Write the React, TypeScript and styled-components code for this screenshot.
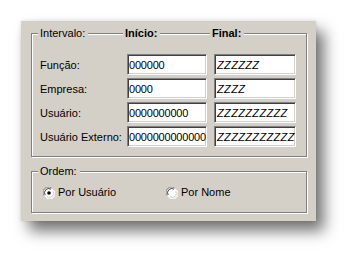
import { Fragment } from 'react'
import styled, { createGlobalStyle } from 'styled-components'

const GlobalStyle = createGlobalStyle`
  html, body {
    margin: 0;
    padding: 0;
    background: #ffffff;
  }
  body {
    font-family: "Liberation Sans", Arial, sans-serif;
    font-size: 11px;
    color: #000000;
  }
`

const Page = styled.div`
  width: 359px;
  height: 264px;
  padding: 21px 0 0 21px;
  box-sizing: border-box;
`

const Dialog = styled.div`
  width: 295px;
  height: 200px;
  box-sizing: border-box;
  padding: 12px 9px 0 10px;
  background: #d4d0c8;
  box-shadow: 8px 10px 14px rgba(0, 0, 0, 0.55), 0 0 4px rgba(0, 0, 0, 0.12);
  display: flex;
  flex-direction: column;
  gap: 14px;
`

const Group = styled.div<{ $padTop: number; $padBottom: number }>`
  position: relative;
  border: 1px solid #808080;
  box-shadow: 1px 1px 0 #ffffff, inset 1px 1px 0 #ffffff;
  padding: ${({ $padTop }) => $padTop}px 0 ${({ $padBottom }) => $padBottom}px 8px;
`

const Grid = styled.div`
  display: grid;
  grid-template-columns: 80px 80px 82px;
  column-gap: 7px;
  row-gap: 3px;
  align-items: center;
`

const Legends = styled(Grid)`
  position: absolute;
  top: -8px;
  left: 8px;
`

const Legend = styled.span<{ $bold?: boolean }>`
  justify-self: start;
  background: #d4d0c8;
  margin-left: ${({ $bold }) => ($bold ? -4 : -2)}px;
  padding: 0 3px 0 2px;
  line-height: 14px;
  font-weight: ${({ $bold }) => ($bold ? 700 : 400)};
`

const SingleLegend = styled(Legend)`
  position: absolute;
  top: -8px;
  left: 8px;
`

const Label = styled.span`
  white-space: nowrap;
  min-width: 0;
`

const Field = styled.div<{ $italic?: boolean }>`
  height: 21px;
  min-width: 0;
  box-sizing: border-box;
  border-style: solid;
  border-width: 1px;
  border-color: #808080 #ffffff #ffffff #808080;
  box-shadow: inset 1px 1px 0 #404040, inset -1px -1px 0 #d4d0c8;
  background: #ffffff;
  padding: 0 0 0 ${({ $italic }) => ($italic ? 2 : 1)}px;
  display: flex;
  align-items: center;
  overflow: hidden;
  white-space: nowrap;
  font-style: ${({ $italic }) => ($italic ? 'italic' : 'normal')};
  letter-spacing: ${({ $italic }) => ($italic ? '0.35px' : '-0.2px')};
`

const Options = styled.div`
  display: grid;
  grid-template-columns: 123px auto;
  padding-left: 3px;
  align-items: center;
`

const Option = styled.label`
  display: flex;
  align-items: center;
  gap: 3px;
  line-height: 13px;
`

const RadioDot = ({ checked }: { checked?: boolean }) => (
  <svg width="12" height="12" viewBox="0 0 12 12">
    <circle cx="6" cy="6" r="5.5" fill="#ffffff" />
    <path d="M1.2 8.5 A5.2 5.2 0 0 1 8.5 1.2" stroke="#808080" strokeWidth="1" fill="none" />
    <path d="M2.2 8 A4.2 4.2 0 0 1 8 2.2" stroke="#404040" strokeWidth="1" fill="none" />
    <path d="M10.8 3.5 A5.2 5.2 0 0 1 3.5 10.8" stroke="#ffffff" strokeWidth="1" fill="none" />
    <path d="M9.8 4 A4.2 4.2 0 0 1 4 9.8" stroke="#d4d0c8" strokeWidth="1" fill="none" />
    {checked && <circle cx="6" cy="6" r="1.8" fill="#000000" />}
  </svg>
)

const rows = [
  { label: 'Função:', start: '000000', end: 'ZZZZZZ' },
  { label: 'Empresa:', start: '0000', end: 'ZZZZ' },
  { label: 'Usuário:', start: '0000000000', end: 'ZZZZZZZZZZ' },
  { label: 'Usuário Externo:', start: '0000000000000', end: 'ZZZZZZZZZZZ' },
]

export default function App() {
  return (
    <>
      <GlobalStyle />
      <Page>
        <Dialog>
          <Group $padTop={20} $padBottom={9}>
            <Legends>
              <Legend>Intervalo:</Legend>
              <Legend $bold>Início:</Legend>
              <Legend $bold>Final:</Legend>
            </Legends>
            <Grid>
              {rows.map((r) => (
                <Fragment key={r.label}>
                  <Label>{r.label}</Label>
                  <Field>{r.start}</Field>
                  <Field $italic>{r.end}</Field>
                </Fragment>
              ))}
            </Grid>
          </Group>
          <Group $padTop={14} $padBottom={13}>
            <SingleLegend>Ordem:</SingleLegend>
            <Options>
              <Option>
                <RadioDot checked />
                Por Usuário
              </Option>
              <Option>
                <RadioDot />
                Por Nome
              </Option>
            </Options>
          </Group>
        </Dialog>
      </Page>
    </>
  )
}
